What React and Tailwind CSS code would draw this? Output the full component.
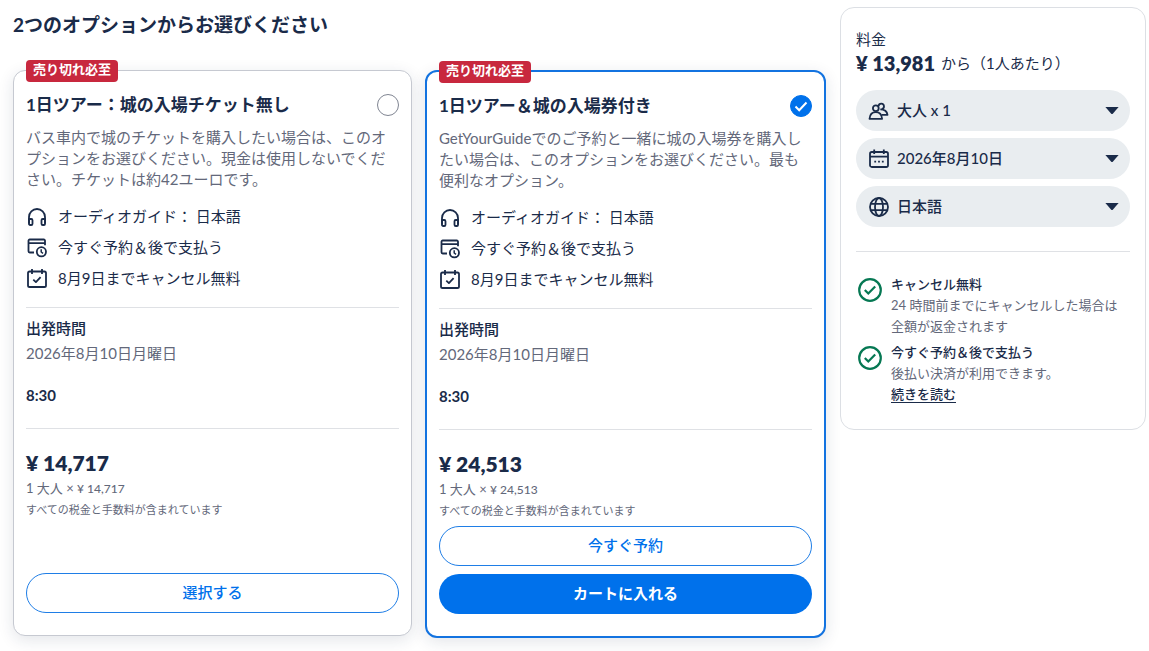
import { useState } from 'react'

const options = [
  {
    id: 'bus-only',
    title: '1日ツアー：城の入場チケット無し',
    description:
      'バス車内で城のチケットを購入したい場合は、このオプションをお選びください。現金は使用しないでください。チケットは約42ユーロです。',
    price: '¥ 14,717',
  },
  {
    id: 'with-castle',
    title: '1日ツアー＆城の入場券付き',
    description:
      'GetYourGuideでのご予約と一緒に城の入場券を購入したい場合は、このオプションをお選びください。最も便利なオプション。',
    price: '¥ 24,513',
  },
]

const iconProps = {
  viewBox: '0 0 22 22',
  fill: 'none',
  stroke: 'currentColor',
  strokeWidth: 1.8,
  strokeLinejoin: 'round',
  'aria-hidden': true,
}

const HeadphonesIcon = () => (
  <svg {...iconProps} className="size-[22px] shrink-0">
    <path d="M3 17.5V11a8 8 0 0 1 16 0v6.5" />
    <path d="M3 13h2.2a1.3 1.3 0 0 1 1.3 1.3v3.4A1.3 1.3 0 0 1 5.2 19H4.1A1.1 1.1 0 0 1 3 17.9z" />
    <path d="M19 13h-2.2a1.3 1.3 0 0 0-1.3 1.3v3.4a1.3 1.3 0 0 0 1.3 1.3h1.1a1.1 1.1 0 0 0 1.1-1.1z" />
  </svg>
)

const PayLaterIcon = () => (
  <svg {...iconProps} className="size-[22px] shrink-0">
    <path d="M8 15.5H3.7a1.2 1.2 0 0 1-1.2-1.2V3.7a1.2 1.2 0 0 1 1.2-1.2h14.1A1.2 1.2 0 0 1 19 3.7v4.5M2.5 6.2H19" />
    <circle cx="15.4" cy="14.8" r="4.6" />
    <path d="M15.2 12.2V15l1.8 1.4" strokeWidth="1.5" />
  </svg>
)

const CalendarCheckIcon = () => (
  <svg {...iconProps} className="size-[22px] shrink-0">
    <rect x="2" y="3.5" width="18" height="15.5" rx="1.6" />
    <path d="M6 1v5M16 1v5" />
    <path d="m7.3 11.6 2.6 2.5 4.7-4.9" />
  </svg>
)

const PeopleIcon = () => (
  <svg {...iconProps} className="size-[22px] shrink-0">
    <circle cx="7.8" cy="8.2" r="2.9" />
    <path d="M1.5 18.8c.4-4.3 2.7-6.6 6.3-6.6s5.9 2.300 6.300 6.600z" />
    <path d="M10.6 6.2a2.700 2.700 0 1 1 3 2.900" />
    <path d="M12.3 9.3c4 0 6.700 1.600 7.200 5.500h-5.900" />
  </svg>
)

const CalendarIcon = () => (
  <svg {...iconProps} className="size-[22px] shrink-0">
    <rect x="2" y="4" width="18" height="15" rx="1.8" />
    <path d="M6.2 1.5V6M15.8 1.5V6M2 8.6h18" />
    <path d="M6.3 13.6h1.8M10.1 13.6h1.8M13.9 13.6h1.8" />
  </svg>
)

const GlobeIcon = () => (
  <svg {...iconProps} className="size-[22px] shrink-0">
    <circle cx="11" cy="11" r="9" />
    <ellipse cx="11" cy="11" rx="4" ry="9" />
    <path d="M2.7 7.8h16.6M2.7 14.2h16.6" />
  </svg>
)

const GreenCheck = () => (
  <svg viewBox="0 0 24 24" fill="none" stroke="currentColor" strokeWidth="2.2"
       className="mt-1 size-6 shrink-0 text-[#067853]" aria-hidden>
    <circle cx="12" cy="12" r="10.8" />
    <path d="m6.8 12 3.5 3.5 6.9-7" />
  </svg>
)

const features = [
  { icon: HeadphonesIcon,    label: 'オーディオガイド： 日本語' },
  { icon: PayLaterIcon,      label: '今すぐ予約＆後で支払う' },
  { icon: CalendarCheckIcon, label: '8月9日までキャンセル無料' },
]

const filters = [
  { id: 'people',   icon: PeopleIcon,   name: '人数', value: '大人 x 1' },
  { id: 'date',     icon: CalendarIcon, name: '日付', value: '2026年8月10日' },
  { id: 'language', icon: GlobeIcon,    name: '言語', value: '日本語' },
]

function OptionCard({ option, selected, onSelect }) {
  return (
    <article
      className={`relative flex-1 min-w-0 rounded-xl px-3 py-[22px] bg-white
                  shadow-[0_4px_16px_rgba(26,43,73,0.12)]
                  ${selected ? 'border-2 border-[#1373e0]' : 'border border-[#c6c9d1]'}`}
    >
      <span className="absolute -top-[11px] left-3 h-[22px] px-[7px] rounded-sm bg-[#c8283e]
                       text-white text-[13px] leading-[18px] font-bold">
        売り切れ必至
      </span>

      <div className="flex items-center justify-between">
        <label htmlFor={option.id} className="text-[17px] leading-6 font-bold">
          {option.title}
        </label>
        <span className="relative flex size-[22px] shrink-0">
          <input
            type="radio"
            name="option"
            id={option.id}
            checked={selected}
            onChange={onSelect}
            className="appearance-none size-[22px] rounded-full border border-[#808592] bg-white
                       checked:border-[#0071eb] checked:bg-[#0071eb]"
          />
          {selected && (
            <svg viewBox="0 0 22 22" fill="none" stroke="white" strokeWidth="2"
                 className="absolute inset-0 pointer-events-none" aria-hidden>
              <path d="m5.5 11.5 3.7 3.7 7.3-7.7" />
            </svg>
          )}
        </span>
      </div>

      <p className="mt-[10px] text-[15px] leading-[21px] text-[#63687a]">{option.description}</p>

      <ul className="mt-4 flex flex-col gap-[10px]">
        {features.map(({ icon: Icon, label }) => (
          <li key={label} className="flex items-center gap-[10px] text-[15px] leading-[21px]">
            <span className="flex items-center h-[21px]"><Icon /></span>
            {label}
          </li>
        ))}
      </ul>

      <div className="mt-[18px] pt-[10px] border-t border-[#dfe1e5] text-[15px] leading-5">
        <h3 className="font-medium">出発時間</h3>
        <p className="mt-[5px] text-[#63687a]">2026年8月10日月曜日</p>
        <p className="mt-[22px] font-bold">8:30</p>
      </div>

      <div className="mt-[23px] pt-5 border-t border-[#dfe1e5]">
        <p className="text-[21px] leading-7 font-extrabold">{option.price}</p>
        <p className="mt-px text-[13px] leading-5 text-[#63687a]">
          1 大人 × <span className="text-[12px] font-medium">{option.price}</span>
        </p>
        <p className="mt-[3px] text-[11px] leading-4 text-[#63687a]">
          すべての税金と手数料が含まれています
        </p>
      </div>

      <div className="mt-[7px] min-h-22 flex flex-col justify-end gap-2 text-[15px]">
        {selected ? (
          <>
            <button className="h-10 pb-[2px] rounded-full border border-[#1f7ee6] text-[#0071eb] font-medium">
              今すぐ予約
            </button>
            <button className="h-10 pb-[2px] rounded-full bg-[#0071eb] text-white font-bold">
              カートに入れる
            </button>
          </>
        ) : (
          <button
            onClick={onSelect}
            className="h-10 pb-[2px] rounded-full border border-[#1f7ee6] text-[#0071eb] font-medium"
          >
            選択する
          </button>
        )}
      </div>
    </article>
  )
}

function PricePanel() {
  return (
    <aside className="w-[306px] shrink-0 mt-[7px] px-[15px] pt-[21px] pb-6 rounded-[14px]
                      border border-[#dcdfe4] bg-white">
      <p className="text-[15px] leading-[21px]">料金</p>
      <p className="flex items-center gap-[6px] leading-[26px]">
        <span className="text-[20px] font-extrabold">¥ 13,981</span>
        <span className="text-[15px]">から（1人あたり）</span>
      </p>

      <div className="mt-[14px] flex flex-col gap-[7px]">
        {filters.map(({ id, icon: Icon, name, value }) => (
          <div key={id} className="relative">
            <select
              id={id}
              aria-label={name}
              className="appearance-none block w-full h-[41px] pl-[41px] pr-10 rounded-full
                         bg-[#e9edf0] text-[15px] font-medium"
            >
              <option>{value}</option>
            </select>
            <label htmlFor={id}
                   className="absolute inset-y-0 left-3 flex items-center pointer-events-none">
              <Icon />
            </label>
            <svg viewBox="0 0 14 7" fill="currentColor" aria-hidden
                 className="absolute right-[11px] top-[17px] w-[14px] h-[7px] pointer-events-none">
              <path d="M.4 0h13.2L8 6.4a1.4 1.4 0 0 1-2 0z" />
            </svg>
          </div>
        ))}
      </div>

      <ul className="mt-6 pt-[22px] border-t border-[#dfe1e5] flex flex-col gap-[5px]
                     text-[13px] leading-[21px]">
        <li className="flex gap-[9px] pl-[2px]">
          <GreenCheck />
          <div>
            <p className="font-medium">キャンセル無料</p>
            <p className="text-[#63687a]">24 時間前までにキャンセルした場合は全額が返金されます</p>
          </div>
        </li>
        <li className="flex gap-[9px] pl-[2px]">
          <GreenCheck />
          <div>
            <p className="font-medium">今すぐ予約＆後で支払う</p>
            <p className="text-[#63687a]">後払い決済が利用できます。</p>
            <a href="#more" className="font-medium border-b border-current">続きを読む</a>
          </div>
        </li>
      </ul>
    </aside>
  )
}

export default function App() {
  const [selectedId, setSelectedId] = useState('with-castle')

  return (
    <div lang="ja"
         className="min-h-screen flex items-start gap-[14px] pl-[13px] pr-[3px] bg-white text-[#1a2b49]
                    font-['Lato','Noto_Sans_CJK_JP',sans-serif]">
      <main className="flex-1 min-w-0 pt-[11px]">
        <h1 className="text-[19px] leading-7 font-bold">2つのオプションからお選びください</h1>
        <div className="mt-[31px] flex items-start gap-[13px]">
          {options.map((option) => (
            <OptionCard
              key={option.id}
              option={option}
              selected={option.id === selectedId}
              onSelect={() => setSelectedId(option.id)}
            />
          ))}
        </div>
      </main>
      <PricePanel />
    </div>
  )
}
